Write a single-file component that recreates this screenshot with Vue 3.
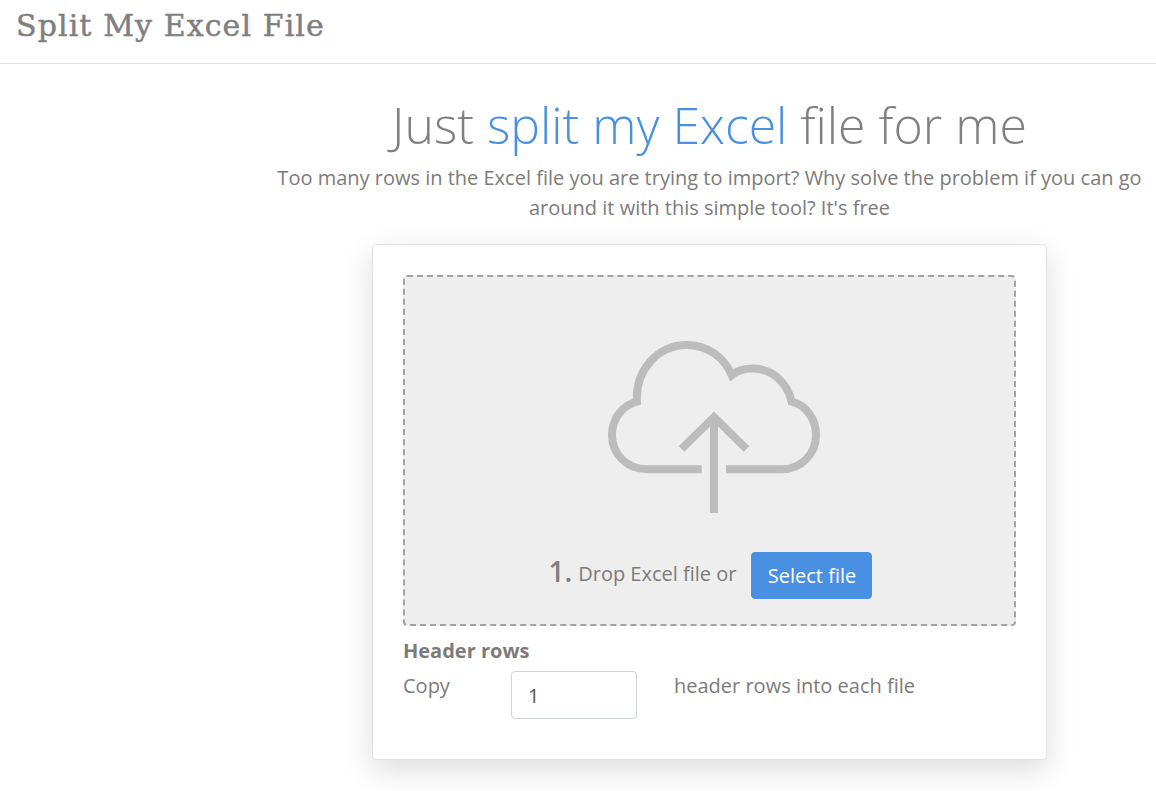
<script setup>
const title = ['Just ', 'split my Excel', ' file for me']
</script>

<template>
  <div class="page">
    <header class="topbar">
      <span class="logo">Split My Excel File</span>
    </header>
    <main class="main">
      <h1 class="title">{{ title[0] }}<span class="accent">{{ title[1] }}</span>{{ title[2] }}</h1>
      <p class="lead">Too many rows in the Excel file you are trying to import? Why solve the problem if you can go around it with this simple tool? It's free</p>
      <section class="card">
        <div class="drop">
          <svg class="cloud" viewBox="0 0 250 190" width="250" height="190" fill="none" stroke="#bcbcbc" stroke-width="8">
            <path d="M111.7 139.3H56.7C37 139.3 22 124 22 105C22 88 33 75 47 71.7C45 40 68 15 97 15C117 15 134 27 141.7 45C148 40 155 38.5 163 38.5C182 38.5 197 52 201.7 71.7C216 75 226 89 226 105C226 124 211 139.3 192 139.3H136" />
            <path d="M124 183V87" />
            <path d="M91.5 119L124 87L156.500 119" />
          </svg>
          <div class="drop-row">
            <span class="step">1.</span>
            <span class="drop-text">Drop Excel file or</span>
            <button class="btn" type="button">Select file</button>
          </div>
        </div>
        <div class="label">Header rows</div>
        <div class="copy-row">
          <span class="copy">Copy</span>
          <input class="num" type="text" value="1" />
          <span class="after">header rows into each file</span>
        </div>
      </section>
    </main>
  </div>
</template>

<style>
html, body { margin: 0; background: #fff; }
</style>

<style scoped>
.page {
  font-family: "Open Sans", "Noto Sans", sans-serif;
  color: #7d7b78;
  min-height: 791px;
}
.topbar {
  height: 63px;
  border-bottom: 1px solid #e4e4e4;
  padding-left: 16px;
  box-sizing: content-box;
}
.logo {
  display: block;
  font-family: "DejaVu Serif", serif;
  font-size: 30px;
  letter-spacing: 1.1px;
  line-height: 51px;
  color: #7f7f7f;
  -webkit-text-stroke: 0.5px #7f7f7f;
  white-space: nowrap;
}
.main {
  margin-left: 270px;
  width: 879px;
  display: flex;
  flex-direction: column;
  align-items: center;
}
.title {
  margin: 28px 0 0;
  font-size: 50px;
  font-weight: 300;
  line-height: 66px;
  color: #808080;
  white-space: nowrap;
}
.accent { color: #4a90e2; }
.lead {
  margin: 5px 0 0;
  font-size: 20px;
  line-height: 30px;
  text-align: center;
}
.card {
  box-sizing: border-box;
  width: 675px;
  height: 516px;
  margin-top: 21px;
  padding: 30px;
  background: #fff;
  border: 1px solid #e3e3e3;
  border-radius: 4px;
  box-shadow: 0 10px 30px rgba(0, 0, 0, 0.14);
}
.drop {
  box-sizing: border-box;
  height: 351px;
  background: #eee;
  border: 2px dashed #a3a3a3;
  border-radius: 4px;
  display: flex;
  flex-direction: column;
  align-items: center;
}
.cloud { display: block; margin: 53px 0 0 10px; }
.drop-row {
  display: flex;
  align-items: center;
  margin-top: 28px;
  padding-left: 2px;
}
.step {
  font-size: 28px;
  font-weight: 600;
  line-height: 47px;
  padding-bottom: 8px;
  color: #7f7f7f;
}
.drop-text {
  font-size: 20px;
  margin-left: 6px;
  padding-bottom: 4px;
}
.btn {
  margin-left: 15px;
  width: 121px;
  height: 47px;
  background: #4a90e2;
  border: 1px solid #4a90e2;
  border-radius: 4px;
  color: #fff;
  font: 20px "Open Sans", sans-serif;
  padding: 0;
}
.label {
  margin-top: 12px;
  font-size: 20px;
  font-weight: 700;
  line-height: 25px;
}
.copy-row {
  display: flex;
  align-items: flex-start;
  margin-top: 8px;
  font-size: 20px;
  line-height: 30px;
}
.copy { width: 108px; }
.num {
  box-sizing: border-box;
  width: 126px;
  height: 48px;
  border: 1px solid #ced4da;
  border-radius: 4px;
  padding: 0 16px;
  color: #555;
  font: 20px "Open Sans", sans-serif;
  background: #fff;
}
.after { margin-left: 37px; }
</style>
